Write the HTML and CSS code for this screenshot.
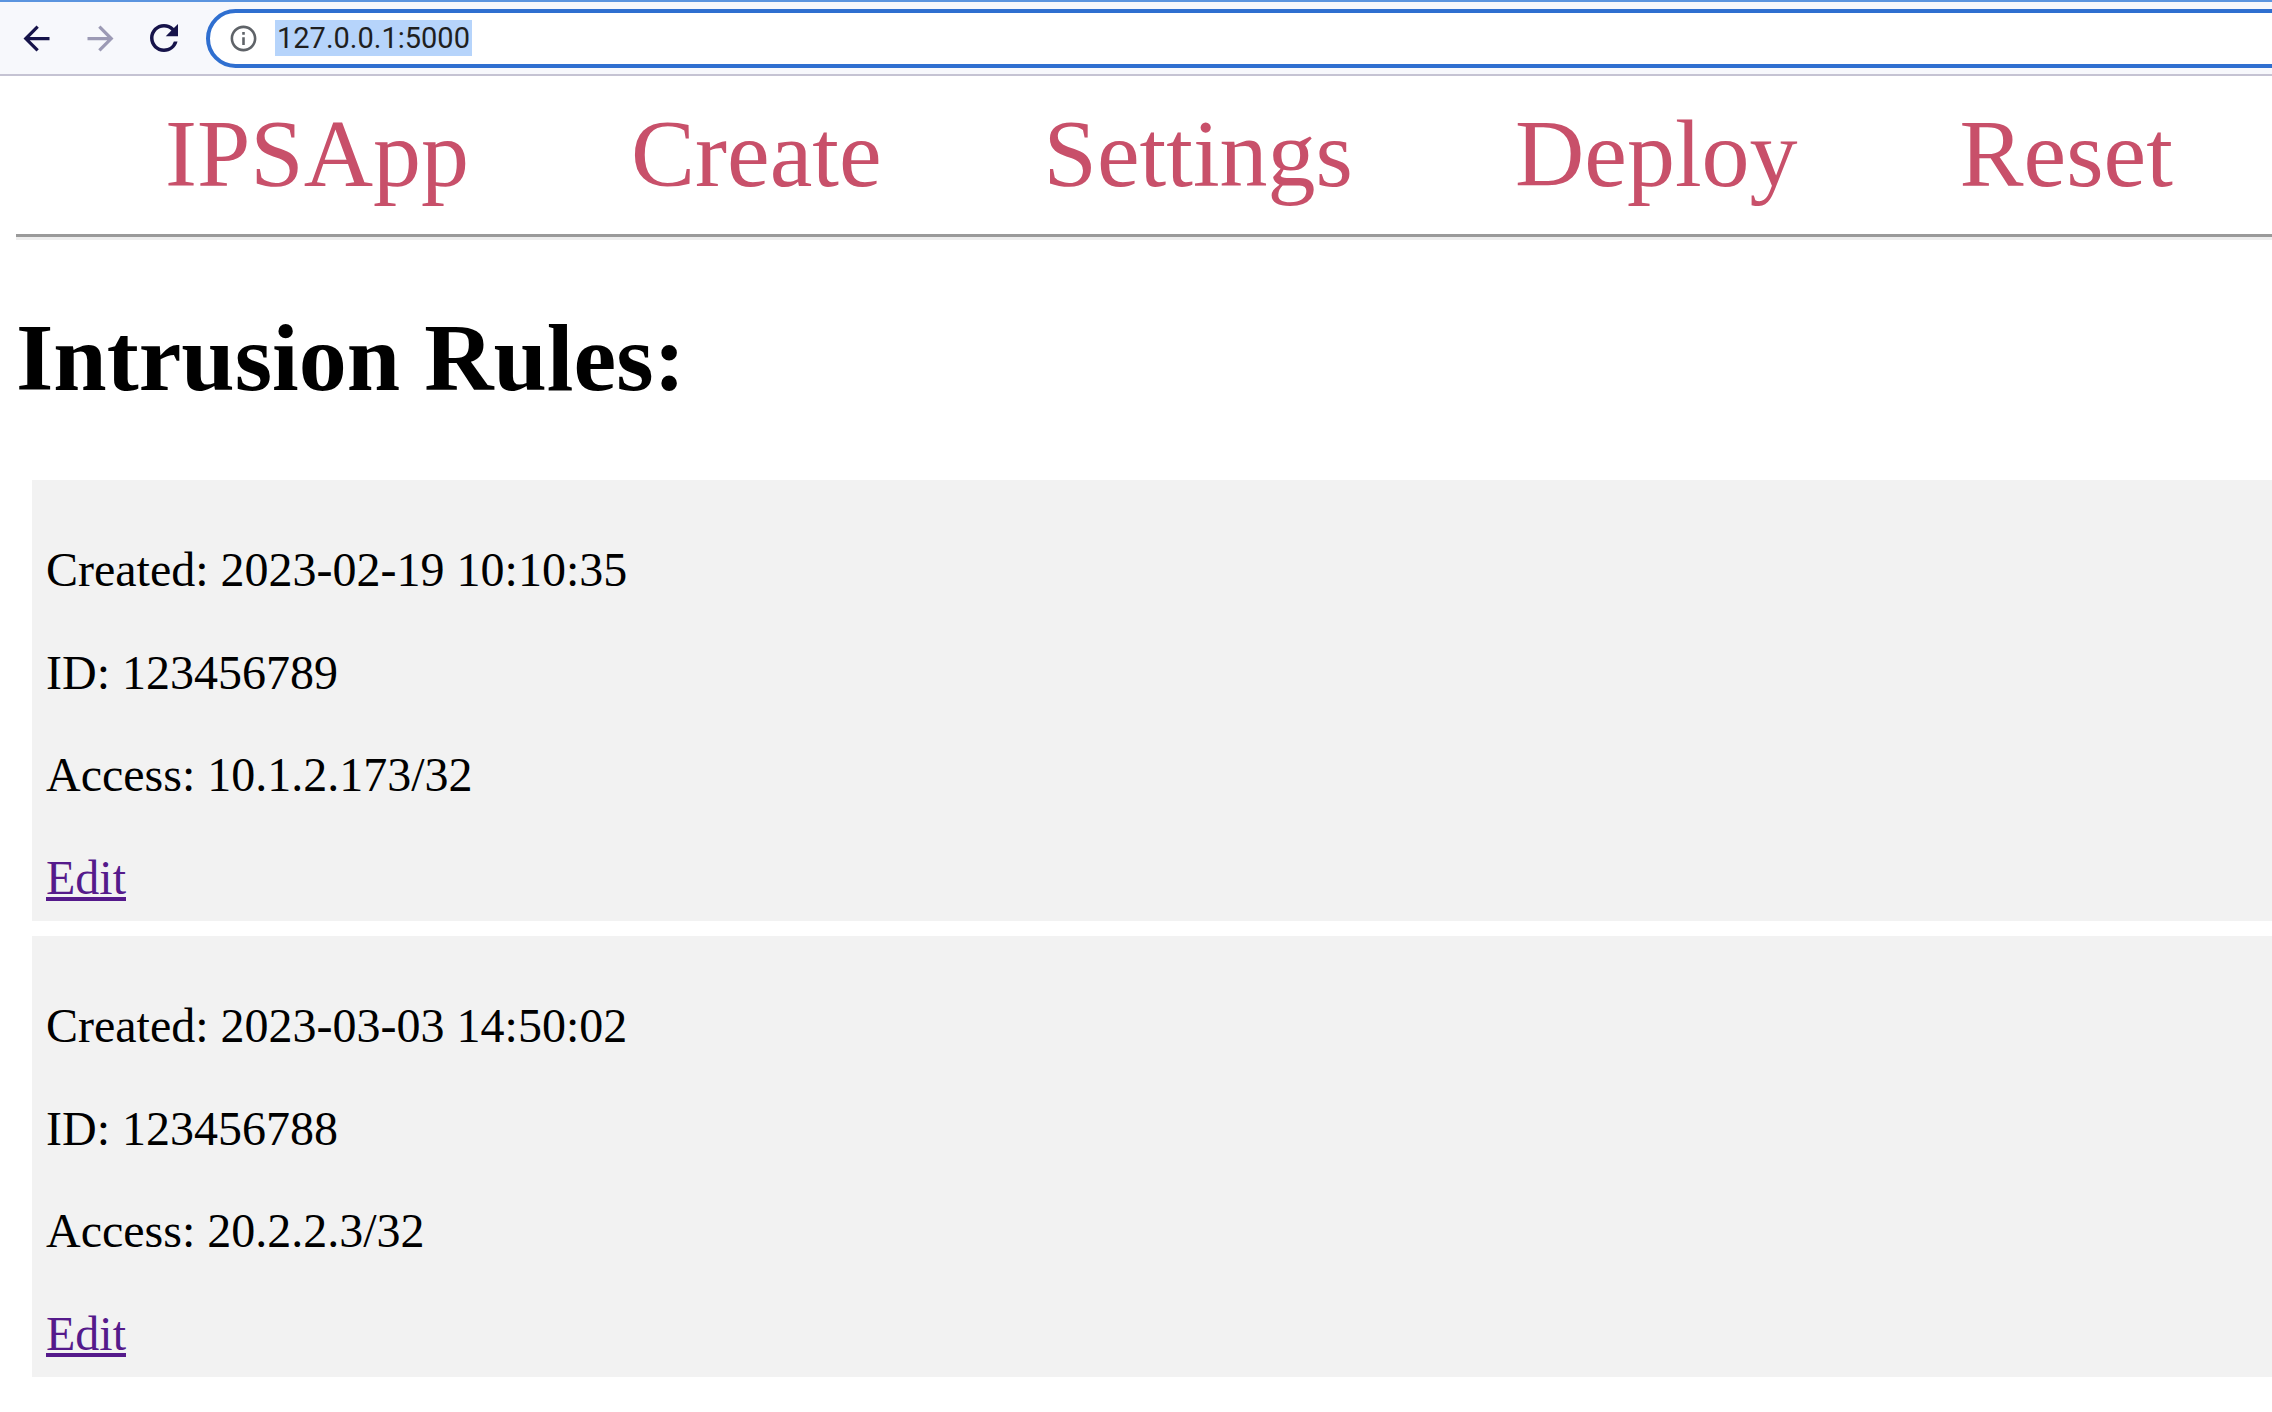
FILE: index.html
```html
<!DOCTYPE html>
<html lang="en">
<head>
<meta charset="utf-8">
<title>IPSApp</title>
<link rel="stylesheet" href="styles.css">
</head>
<body>
<div class="chrome">
  <div class="topline"></div>
  <div class="toolbar">
    <svg class="tb-icon back" viewBox="0 0 24 24"><path d="M20 11H7.83l5.59-5.59L12 4l-8 8 8 8 1.41-1.41L7.83 13H20v-2z"/></svg>
    <svg class="tb-icon fwd" viewBox="0 0 24 24"><path d="M12 4l-1.41 1.41L16.17 11H4v2h12.17l-5.58 5.59L12 20l8-8z"/></svg>
    <svg class="tb-icon reload" viewBox="0 0 24 24"><path d="M17.65 6.35A7.958 7.958 0 0 0 12 4c-4.42 0-7.99 3.58-7.99 8s3.57 8 7.99 8c3.73 0 6.84-2.55 7.730-6h-2.08A5.99 5.99 0 0 1 12 18c-3.31 0-6-2.690-6-6s2.69-6 6-6c1.66 0 3.14.69 4.22 1.78L13 11h7V4l-2.35 2.35z"/></svg>
    <div class="omnibox">
      <svg class="info" viewBox="0 0 24 24"><path d="M11 7h2v2h-2zm0 4h2v6h-2zm1-9C6.480 2 2 6.48 2 12s4.48 10 10 10 10-4.48 10-10S17.52 2 12 2zm0 18c-4.41 0-8-3.59-8-8s3.59-8 8-8 8 3.59 8 8-3.59 8-8 8z"/></svg>
      <span class="url">127.0.0.1:5000</span>
    </div>
  </div>
</div>

<div class="page">
  <nav class="menu">
    <a href="#">IPSApp</a>
    <a href="#">Create</a>
    <a href="#">Settings</a>
    <a href="#">Deploy</a>
    <a href="#">Reset</a>
  </nav>
  <hr class="divider">
  <h1 class="title">Intrusion Rules:</h1>

  <div class="rule">
    <p>Created: 2023-02-19 10:10:35</p>
    <p>ID: 123456789</p>
    <p>Access: 10.1.2.173/32</p>
    <a class="edit" href="#">Edit</a>
  </div>

  <div class="rule">
    <p>Created: 2023-03-03 14:50:02</p>
    <p>ID: 123456788</p>
    <p>Access: 20.2.2.3/32</p>
    <a class="edit" href="#">Edit</a>
  </div>
</div>
</body>
</html>
```

FILE: styles.css
```css
html, body {
  margin: 0;
  padding: 0;
  overflow: hidden;
  background: #ffffff;
}

body {
  font-family: "Liberation Serif", "Times New Roman", serif;
  color: #000000;
}

/* ---------- browser chrome ---------- */
.topline {
  height: 2px;
  background: #5b94df;
}

.toolbar {
  height: 72px;
  background: #f7f8fc;
  border-bottom: 2px solid #c5c3d3;
  display: flex;
  align-items: center;
  overflow: hidden;
}

.tb-icon {
  flex: none;
  display: block;
  width: 39px;
  height: 39px;
}

.back {
  margin-left: 16.5px;
  fill: #16134a;
}

.fwd {
  margin-left: 25px;
  fill: #9c9ab5;
}

.reload {
  margin-left: 23.5px;
  width: 42px;
  height: 42px;
  fill: #16134a;
}

.omnibox {
  flex: 1 0 auto;
  margin-left: 21px;
  margin-right: -80px;
  height: 59px;
  box-sizing: border-box;
  border: 4px solid #2f6fd0;
  border-radius: 30px;
  background: #ffffff;
  display: flex;
  align-items: center;
}

.info {
  flex: none;
  width: 31px;
  height: 31px;
  margin-left: 18px;
  fill: #5f6368;
}

.url {
  margin-left: 16px;
  padding: 0 2px;
  font-family: Roboto, "Noto Sans", sans-serif;
  font-size: 29px;
  line-height: 36px;
  color: #1f1f1f;
  background: #b6d4fb;
}

/* ---------- page ---------- */
.page {
  margin: 16px -120px 0 16px;
}

.menu {
  display: flex;
  gap: 162px;
  padding: 6px 0 0 149px;
  font-size: 96px;
}

.menu a {
  color: #c8506a;
  text-decoration: none;
}

.divider {
  margin: 25px 0 0;
  height: 0;
  border: 0;
  border-top: 3px solid #9a9a9a;
  border-bottom: 3px solid #eeeeee;
}

.title {
  font-size: 96px;
  font-weight: bold;
  margin: 62px 0 67px;
}

.rule {
  background: #f2f2f2;
  margin: 0 0 15px 16px;
  padding: 15px 14px 16px;
  font-size: 48px;
  line-height: 54.5px;
}

.rule p {
  margin: 48px 0;
}

.rule p:first-child {
  margin-top: 48px;
}

.edit {
  color: #551a8b;
  text-decoration: underline;
}
```
